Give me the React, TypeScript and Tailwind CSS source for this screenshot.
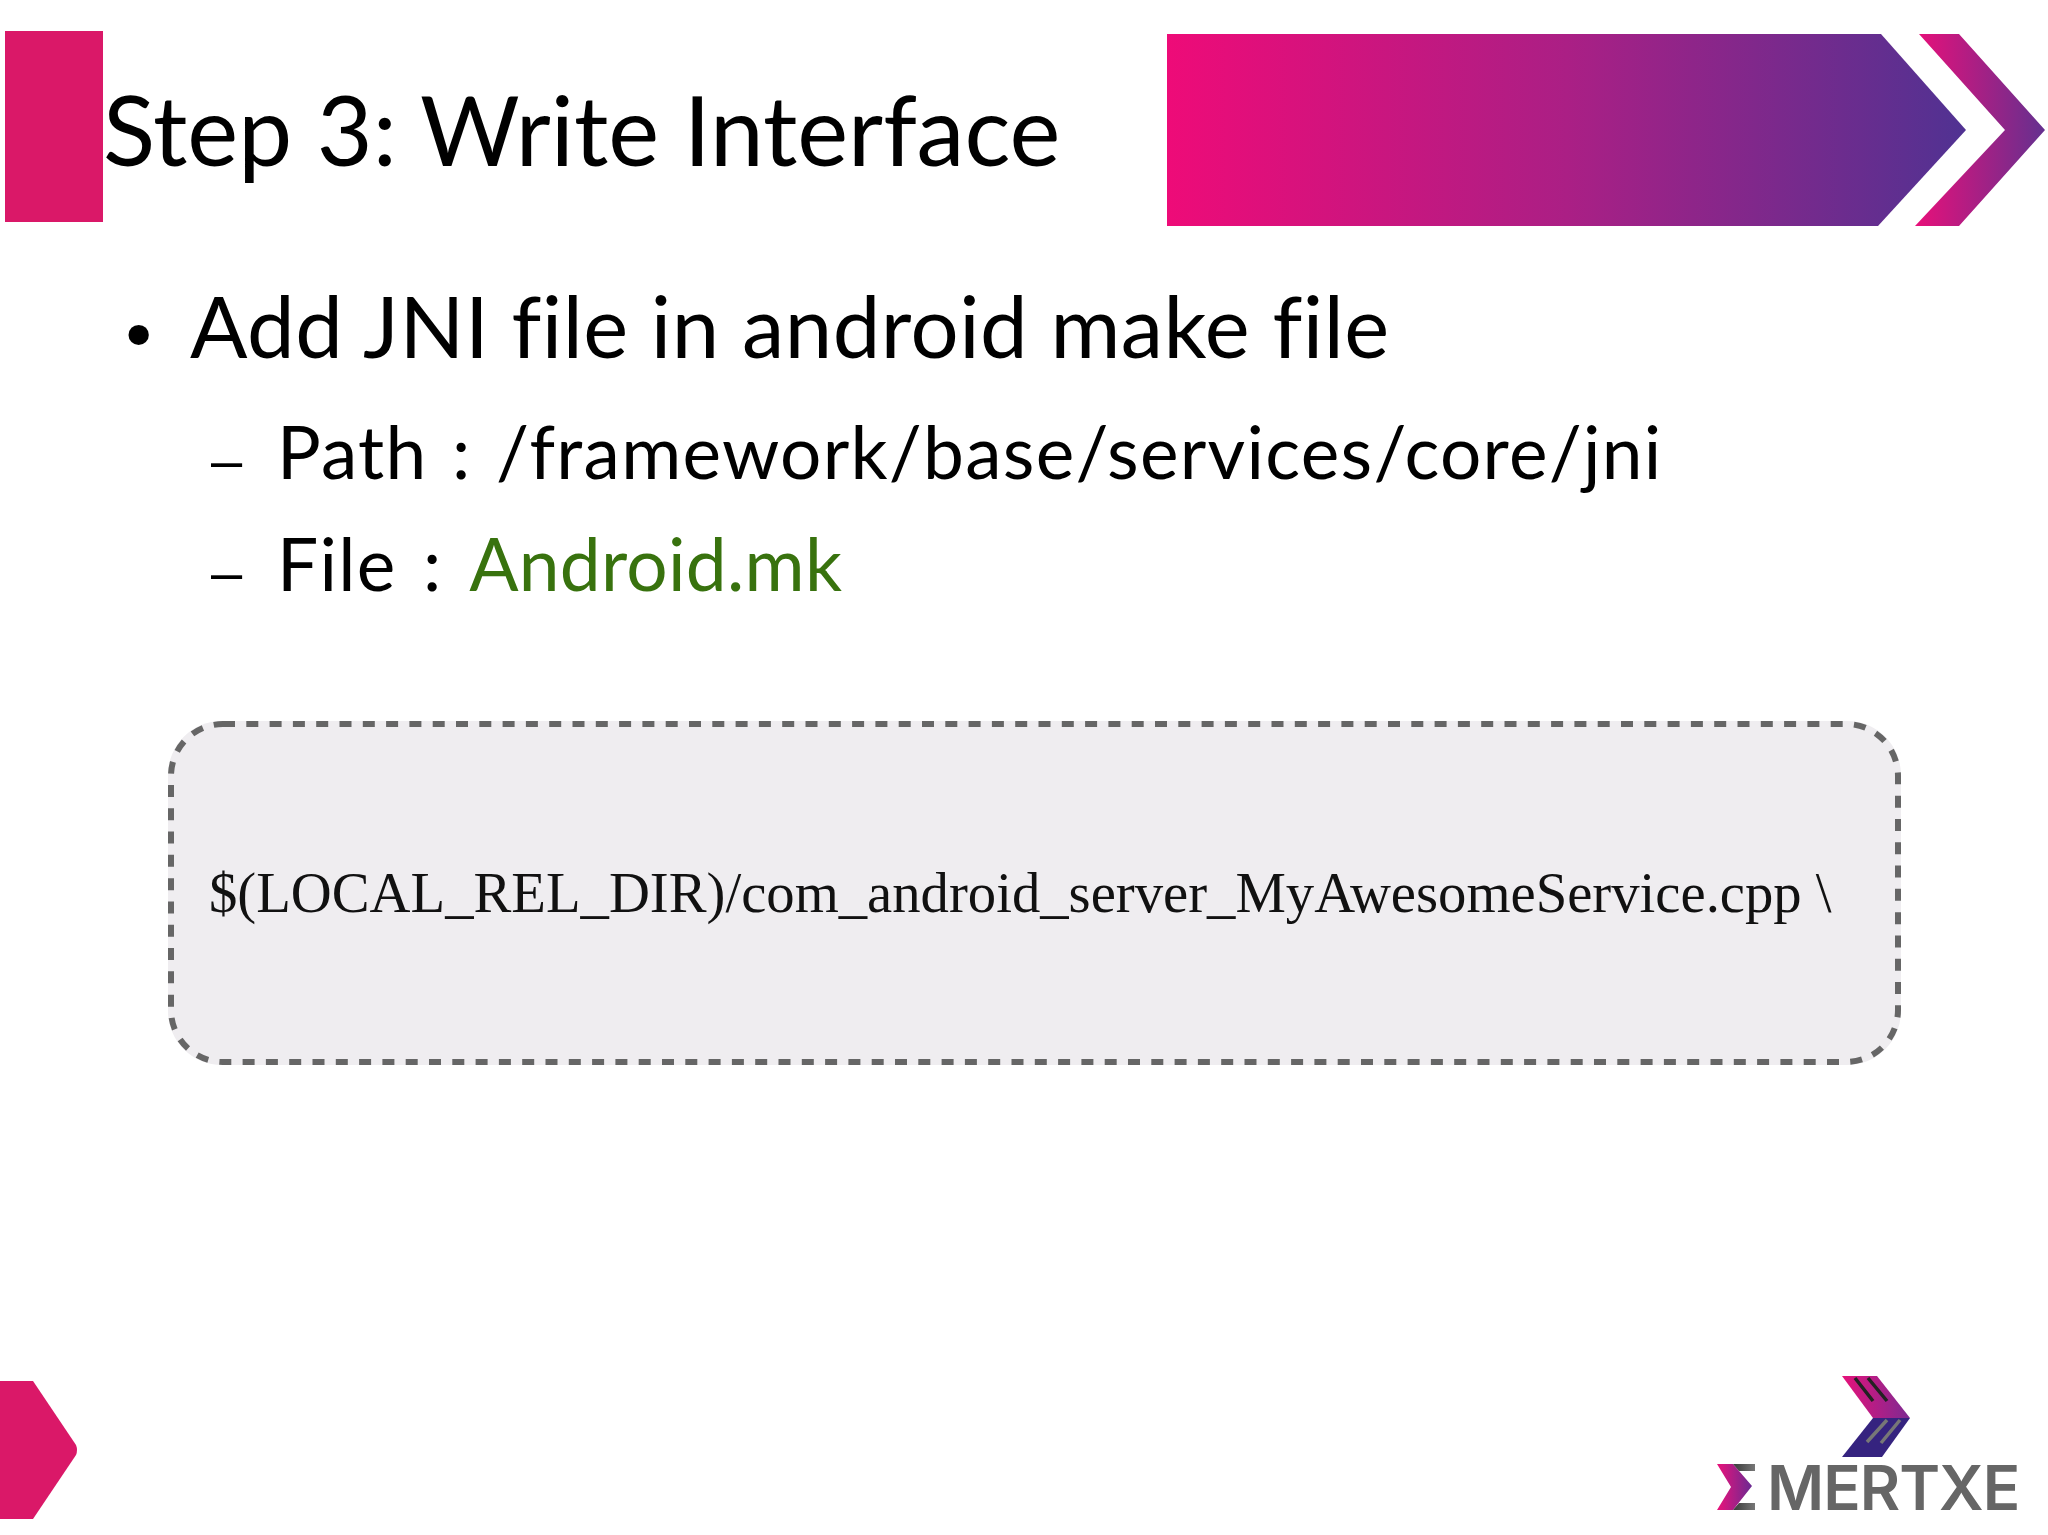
const App = () => {
  return (
    <div className="w-[2048px] h-[1535px] bg-white overflow-hidden flex flex-col font-['Lato',sans-serif] [font-variant-ligatures:none] text-black">
      <header className="flex items-start h-[226px] pt-[31px] pl-[5px]">
        <div className="w-[98px] h-[191px] bg-[#da1868] shrink-0" />
        <h1 className="w-[1064px] shrink-0 text-[96.3px] leading-[110px] mt-[43px] whitespace-nowrap">Step 3: Write Interface</h1>
        <svg width="881" height="192" viewBox="0 0 881 192" className="mt-[3px] shrink-0">
          <defs>
            <linearGradient id="arrowA" x1="0" x2="1" y1="0" y2="0">
              <stop offset="0" stopColor="#ee0b78" />
              <stop offset="0.5" stopColor="#ab1f85" />
              <stop offset="1" stopColor="#503292" />
            </linearGradient>
            <linearGradient id="arrowB" x1="0" x2="1" y1="0" y2="0">
              <stop offset="0" stopColor="#e8107a" />
              <stop offset="1" stopColor="#64308f" />
            </linearGradient>
          </defs>
          <path d="M0 0H714L799 96L711 192H0Z" fill="url(#arrowA)" />
          <path d="M752 0H792L878 96L792 192H748L838 96Z" fill="url(#arrowB)" />
        </svg>
      </header>
      <main className="pl-[125px] pt-[51px]">
        <div className="flex items-baseline h-[96px]">
          <span className="w-[65px] -ml-[7px] mr-[7px] text-[70px] leading-[96px] font-['DejaVu_Sans',sans-serif] translate-y-[3px]">•</span>
          <span className="text-[85px] leading-[96px] whitespace-nowrap tracking-[0.5px]">Add JNI file in android make file</span>
        </div>
        <div className="flex items-baseline h-[84px] mt-[36px] pl-[86px]">
          <span className="w-[66px] text-[56px] leading-[84px] font-['Liberation_Sans',sans-serif]">–</span>
          <span className="text-[73px] leading-[84px] whitespace-nowrap tracking-[1.27px] [word-spacing:4.5px]">Path : /framework/base/services/core/jni</span>
        </div>
        <div className="flex items-baseline h-[84px] mt-[28px] pl-[86px]">
          <span className="w-[66px] text-[56px] leading-[84px] font-['Liberation_Sans',sans-serif]">–</span>
          <span className="text-[73px] leading-[84px] whitespace-nowrap tracking-[1.3px] [word-spacing:6.5px]">File : <span className="text-[#38720e] tracking-[0.3px]">Android.mk</span></span>
        </div>
        <div className="relative w-[1733px] h-[344px] mt-[116px] ml-[43px] px-[41px] flex items-center rounded-[54px] bg-[#efedf0] font-['Liberation_Serif',serif] text-[56.7px] text-[#111111] whitespace-nowrap">
          <svg width="1733" height="344" viewBox="0 0 1733 344" className="absolute left-0 top-0">
            <rect x="3" y="3" width="1727" height="338" rx="52" fill="none" stroke="#666666" strokeWidth="6" strokeDasharray="12 11.3" />
          </svg>
          <span className="relative">$(LOCAL_REL_DIR)/com_android_server_MyAwesomeService.cpp \</span>
        </div>
      </main>
      <footer className="mt-auto h-[159px] flex items-start justify-between">
        <svg width="78" height="138" viewBox="0 0 78 138" className="mt-[5px]">
          <path d="M0 0H33L76 64Q78 69 76 74L33 138H0Z" fill="#da1868" />
        </svg>
        <div className="relative w-[304px] h-[159px] mr-[27px]">
          <svg width="304" height="159" viewBox="0 0 304 159" className="absolute left-0 top-0">
            <defs>
              <linearGradient id="logoTop" x1="0" x2="1" y1="0" y2="0">
                <stop offset="0" stopColor="#e6127a" />
                <stop offset="1" stopColor="#7d2a92" />
              </linearGradient>
              <linearGradient id="logoSigma" x1="0" x2="1" y1="0" y2="0">
                <stop offset="0" stopColor="#ea127a" />
                <stop offset="1" stopColor="#6a2a92" />
              </linearGradient>
              <linearGradient id="logoBar" x1="0" x2="1" y1="0" y2="0">
                <stop offset="0" stopColor="#3a3a3a" />
                <stop offset="1" stopColor="#777777" />
              </linearGradient>
            </defs>
            <path d="M125 0H160L193 42H156Z" fill="url(#logoTop)" />
            <path d="M156 42H193L165 81H125Z" fill="#35237f" />
            <path d="M138 2L156 25M151 2L170 25" stroke="#222222" strokeWidth="3.5" fill="none" />
            <path d="M170 44L150 66M183 44L164 67" stroke="#777777" strokeWidth="3.5" fill="none" />
            <path d="M0 88H16L35 110L16 134H0L14 111Z" fill="url(#logoSigma)" />
            <path d="M16 88H38V95H22ZM22 127H38V134H16Z" fill="url(#logoBar)" />
          </svg>
          <span className="absolute left-[50px] top-[74px] font-['Inter',sans-serif] font-semibold text-[#666666] text-[62px] leading-[75px] tracking-[-1px]">MERTXE</span>
        </div>
      </footer>
    </div>
  );
};

export default App;
